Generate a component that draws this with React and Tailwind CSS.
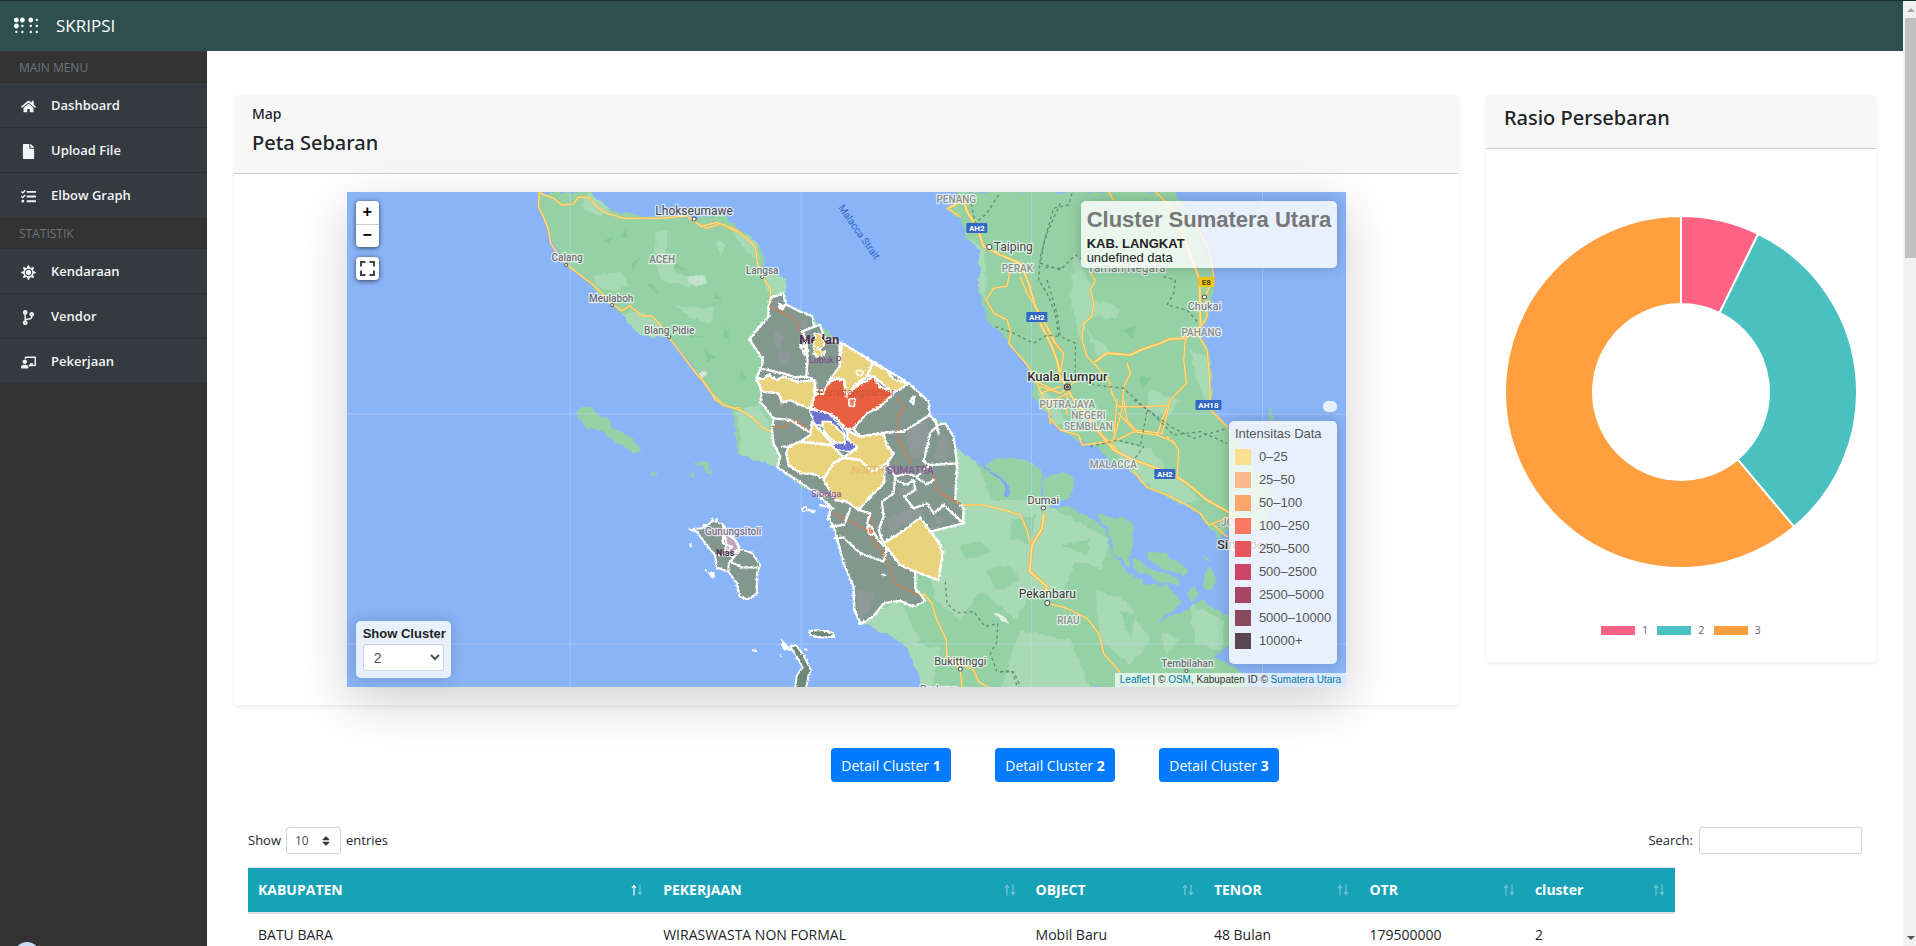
import React from "react";
import {
  FaBraille,
  FaHome,
  FaFile,
  FaTasks,
  FaSun,
  FaCodeBranch,
  FaChalkboardTeacher,
  FaSort,
} from "react-icons/fa";

const menu = [
  {
    title: "MAIN MENU",
    items: [
      { label: "Dashboard", Icon: FaHome },
      { label: "Upload File", Icon: FaFile },
      { label: "Elbow Graph", Icon: FaTasks },
    ],
  },
  {
    title: "STATISTIK",
    items: [
      { label: "Kendaraan", Icon: FaSun },
      { label: "Vendor", Icon: FaCodeBranch },
      { label: "Pekerjaan", Icon: FaChalkboardTeacher },
    ],
  },
];

const intensity = [
  ["0–25", "bg-[#fbe08f]"],
  ["25–50", "bg-[#fbb990]"],
  ["50–100", "bg-[#fca669]"],
  ["100–250", "bg-[#fb7962]"],
  ["250–500", "bg-[#e5575c]"],
  ["500–2500", "bg-[#cb4666]"],
  ["2500–5000", "bg-[#a74562]"],
  ["5000–10000", "bg-[#884a5d]"],
  ["10000+", "bg-[#584650]"],
];

const ratio = [
  { label: "1", value: 26, color: "#ff6384", swatch: "bg-[#ff6384]" },
  { label: "2", value: 114, color: "#4bc0c0", swatch: "bg-[#4bc0c0]" },
  { label: "3", value: 220, color: "#ff9f40", swatch: "bg-[#ff9f40]" },
];

const columns = [
  ["KABUPATEN", "w-[28.4%]"],
  ["PEKERJAAN", "w-[26.1%]"],
  ["OBJECT", "w-[12.5%]"],
  ["TENOR", "w-[10.9%]"],
  ["OTR", "w-[11.6%]"],
  ["cluster", "w-[10.5%]"],
];

const rows = [["BATU BARA", "WIRASWASTA NON FORMAL", "Mobil Baru", "48 Bulan", "179500000", "2"]];

function Sidebar() {
  return (
    <nav className="w-[207px] shrink-0 bg-[#333333]">
      {menu.map((group) => (
        <section key={group.title}>
          <h2 className="flex h-[31px] items-center px-[19px] pt-0.5 text-[12px] leading-4 text-[#6c757d]">
            {group.title}
          </h2>
          <ul>
            {group.items.map(({ label, Icon }) => (
              <li key={label} className="border-t border-[#2d3136]">
                <a
                  href="#"
                  className="flex h-11 items-center bg-[#343a40] pl-[19px] pt-0.5 text-[13px] font-semibold text-[#f3f4f5]"
                >
                  <span className="flex w-[18px] shrink-0 justify-center">
                    <Icon className="h-[15px] w-auto" />
                  </span>
                  <span className="ml-3.5">{label}</span>
                </a>
              </li>
            ))}
          </ul>
        </section>
      ))}
    </nav>
  );
}

function Place({ x, y, s = 11, w = 500, c = "#6a6f74", a = "middle", children, ...rest }) {
  return (
    <text
      x={x}
      y={y}
      fontSize={s}
      fontWeight={w}
      fill={c}
      textAnchor={a}
      stroke="#ffffff"
      strokeOpacity="0.7"
      strokeWidth="2.5"
      strokeLinejoin="round"
      paintOrder="stroke"
      {...rest}
    >
      {children}
    </text>
  );
}

function Shield({ x, y, w = 21, label, fill = "#3367c5", color = "#ffffff" }) {
  return (
    <g>
      <rect x={x} y={y} width={w} height="10" rx="1" fill={fill} />
      <text x={x + w / 2} y={y + 8} fontSize="8" fontWeight="700" fill={color} textAnchor="middle">
        {label}
      </text>
    </g>
  );
}

const crop3 = "translate(700 180) scale(0.3333)";
const crop2 = "translate(340 180) scale(0.3333)";
const crop4 = "translate(1040 180) scale(0.3333)";
const crop5 = "translate(340 430) scale(0.3333)";
const crop6 = "translate(1000 400) scale(0.3333)";
const crop12 = "translate(740 430) scale(0.3333)";

function Road({ d, wide }) {
  return (
    <>
      <path d={d} stroke="#f3b64a" strokeWidth={wide ? 9 : 6} />
      <path d={d} stroke="#ffe290" strokeWidth={wide ? 5 : 3} />
    </>
  );
}

function SumateraMap() {
  return (
    <svg
      viewBox="347 192 999 495"
      preserveAspectRatio="xMidYMid slice"
      className="block h-full w-full font-[Roboto,sans-serif]"
      role="img"
      aria-label="Peta Sumatera Utara"
    >
      <defs>
        <filter id="coast" x="-5%" y="-5%" width="110%" height="110%">
          <feTurbulence type="fractalNoise" baseFrequency="0.11" numOctaves="3" seed="4" />
          <feDisplacementMap in="SourceGraphic" scale="7" xChannelSelector="R" yChannelSelector="G" />
        </filter>
        <filter id="district" x="-5%" y="-5%" width="110%" height="110%">
          <feTurbulence type="fractalNoise" baseFrequency="0.14" numOctaves="3" seed="9" />
          <feDisplacementMap in="SourceGraphic" scale="9" xChannelSelector="R" yChannelSelector="G" />
        </filter>
        <clipPath id="land">
          <path d="M538 192 540 212 548 230 555 248 568 265 590 285 608 303 622 313 631 326 640 333 652 338 665 337 672 341 690 362 700 378 710 392 722 406 733 410 737 453 744 458 760 461 778 468 800 485 838 502 868 515 895 560 860 623 887 633 907 647 912 663 920 677 925 690 1248 690 1247 680 1233 665 1213 657 1228 647 1234 630 1228 617 1217 610 1200 600 1187 608 1157 622 1182 603 1167 585 1143 583 1127 573 1110 550 1105 528 1087 517 1072 508 1050 508 1041 500 1043 473 1033 463 1013 457 992 460 983 465 967 457 955 447 953 437 945 423 930 417 928 402 908 383 887 370 867 358 840 343 820 325 810 315 787 307 783 295 787 280 765 267 762 252 755 240 735 227 735 223 723 215 693 218 657 216 640 217 613 210 603 205 590 190Z" />
          <path d="M958 190 956 202 947 210 962 223 967 237 978 250 980 267 978 293 985 307 988 323 1000 330 1008 343 1023 360 1033 377 1033 397 1047 413 1060 430 1078 440 1097 447 1110 462 1133 472 1147 488 1167 497 1187 507 1203 520 1210 530 1218 538 1227 530 1262 530 1274 500 1250 460 1227 427 1210 407 1212 383 1210 353 1202 340 1197 332 1207 317 1213 290 1213 273 1200 240 1187 210 1173 190Z" />
        </clipPath>
      </defs>

      <rect x="347" y="192" width="999" height="495" fill="#8ab4f8" />

      <g filter="url(#coast)">
        <g clipPath="url(#land)">
          <rect x="347" y="192" width="999" height="495" fill="#94d2a5" />
          <g fill="#a8dab5">
            <path d="M950 430 975 455 990 500 1040 500 1110 540 1100 570 1075 560 1060 600 1030 590 1015 620 980 590 960 620 935 600 925 560 930 530 960 520Z" />
            <path d="M860 620 900 600 920 640 900 660ZM905 640 940 650 930 690 905 690ZM1095 590 1125 600 1150 640 1130 665 1100 640ZM1020 630 1070 640 1090 690 1000 690Z" />
            <path d="M737 410 760 405 775 440 780 470 740 455Z" />
            <path d="M620 312 645 312 670 335 650 340 632 328ZM765 268 790 280 785 300 765 290ZM590 192 610 208 600 217 580 205Z" />
            <path d="M655 232 668 230 666 255 680 275 700 280 690 288 660 280 655 255ZM595 275 620 272 628 285 615 292 598 285ZM675 305 715 308 712 322 690 318ZM715 240 725 245 720 255Z" />
            <path d="M1075 250 1095 300 1120 310 1115 320 1090 315 1080 340 1070 300ZM1085 330 1110 350 1100 360ZM1190 350 1210 360 1210 410 1196 380ZM965 235 985 250 985 300 975 290Z" />
            <path d="M1110 440 1150 450 1200 500 1180 505 1130 475ZM1150 390 1180 400 1170 415 1145 410ZM1035 385 1055 400 1070 430 1050 420Z" />
            <path d="M730 228 755 240 760 262 745 250ZM700 190 720 215 690 218 650 205Z" />
            <path d="M1190 605 1225 620 1220 650 1195 645ZM1160 630 1180 640 1165 655Z" />
          </g>
          <g fill="#94d2a5">
            <path d="M985 470 1010 465 1030 475 1025 490 1000 490ZM960 545 980 540 990 552 965 560ZM1010 520 1035 515 1030 545 1012 540ZM985 570 1010 565 1020 580 995 590ZM1060 545 1090 540 1085 555ZM1120 610 1135 615 1130 640Z" />
          </g>
          <g fill="#7fc596" opacity="0.7">
            <path d="M605 240 612 237 609 245ZM630 262 640 258 634 268ZM675 262 688 270 676 268ZM650 285 660 292 648 290ZM690 330 702 338 690 338ZM715 290 722 300 714 298ZM705 350 715 358 705 362ZM725 325 730 340 722 335ZM740 370 748 378 738 380ZM620 235 625 230 628 238ZM1100 230 1110 240 1100 245ZM1125 330 1135 325 1130 338ZM1140 375 1150 380 1140 388Z" />
          </g>
          <path d="M983 463 Q990 475 1000 478 T1007 497" fill="none" stroke="#7fa8f0" strokeWidth="3" />
          <path d="M995 613 Q1003 612 1008 623 Q1000 622 995 613Z" fill="#e0efe6" />
          <path d="M697 374 706 371 704 378Z" fill="#dfe6df" />
          <path d="M687 278 702 275 706 284 695 287Z" fill="#c3e2cc" />
        </g>
        <g fill="#94d2a5">
          <path transform={crop6} d="M130 240Q150 225 190 215L220 240 215 290 150 318 130 300ZM285 340 390 360 400 400 385 500 340 460 325 390ZM395 500 400 475 430 490 460 510 530 530 535 555 470 545ZM440 460 490 455 560 510 550 528 500 510 445 480ZM560 575 580 560 597 590 570 605ZM612 520 630 500 650 540 630 575 612 555ZM603 462 625 475 618 485ZM800 60 812 22 820 60Z" />
          <path transform={crop2} d="M710 700 725 680 755 678 772 705 812 718 818 742 870 772 905 810 880 820 820 780 780 755 735 740Z" />
          <path transform={crop5} d="M755 0 800 -8 850 20 903 58 880 72 840 45 800 12ZM1060 98 1105 96 1112 140 1090 112ZM935 125H947V135H937ZM1048 128H1066L1056 146Z" />
        </g>
      </g>

      <path
        d="M570 192V687M801 192V687M1031 192V687M1262 192V687M347 414H1346M347 644H1346"
        stroke="#c6dafb"
        strokeOpacity="0.5"
        strokeWidth="1"
      />

      <g fill="none" strokeLinejoin="round" strokeLinecap="round">
        <g transform={crop2}>
          <Road d="M598 36 595 80 612 115 625 150 632 190 655 225 680 255 720 285 760 315 790 345 815 372 845 392 870 378 905 408 935 408 965 440 987 472 1015 510 1045 550 1075 590 1100 615 1125 660 1165 682 1200 684" />
          <Road d="M600 40 640 55 665 75 700 72 715 52 745 52 775 85 800 100 850 115 960 115 1040 108 1070 130 1100 145 1140 132 1200 160" />
        </g>
        <g transform={crop3}>
          <Road d="M0 140 50 128 110 150 165 200 172 250 190 295 212 330 208 370" />
          <Road d="M0 590 30 635 70 675 120 690 160 715 190 745 215 755" />
          <Road d="M785 975 850 975 910 990 960 1005 980 1050 990 1090" />
          <Road wide d="M1030 1010 1020 1060 995 1090 988 1170 1030 1210 1045 1240" />
          <Road wide d="M745 85 790 60 800 95 830 140 850 200 900 225 960 250 985 310 1005 380 1040 440 1065 490 1080 510" />
          <Road d="M740 85 780 110M930 270 920 318 880 325 858 360 880 400 920 420 932 460 925 490 985 560 1010 610 1045 690 1050 730M960 290 980 340 1000 370M1000 600 1080 640M1020 640 1080 620M1030 660 1080 660" />
        </g>
        <g transform={crop4}>
          <Road wide d="M165 545 200 520 270 525 300 510 360 490 385 478 435 475 480 440 478 300 440 200 400 90" />
          <Road wide d="M0 430 30 490 50 540 60 590 100 660 150 720 190 770 230 810" />
          <Road d="M150 280 165 300 150 330 160 370 155 410 130 430 125 480 140 530 170 560 205 600 215 640 235 680 285 680 385 677M345 36 400 90 470 140 505 210 520 290 495 350 500 410 470 460 500 510 508 600 510 690 560 740M435 475 430 540 438 610 390 660 365 760 280 750 235 700M260 550 270 580 250 620 245 690 220 780M45 490 70 520 60 580M0 620 60 640 110 600M10 680 80 640 80 700M380 770 410 800M205 36 220 60" />
        </g>
        <g transform={crop6}>
          <Road wide d="M290 90 340 150 400 180 470 205 520 225 560 250 620 300 700 345" />
          <Road d="M145 50 180 90 235 105 245 135 290 130 350 120 400 95 470 105 520 125 535 150 530 230M400 215 440 262 500 285 560 315 600 340 625 375 690 350M630 30 680 80M370 0 380 60 410 95M470 105 500 20 510 0M350 0 340 120M640 375 680 410" />
          <Road d="M145 610 200 625 260 655 295 700 310 760 360 818" />
          <Road wide d="M130 345 125 385 95 435 88 515 140 560" />
        </g>
        <g transform={crop12}>
          <Road d="M550 490 575 520 590 570 618 630 620 680 700 720 715 755 750 775M620 680 660 720 665 770" />
        </g>
        <g stroke="#5d7f69" strokeWidth="4" strokeDasharray="9 9" strokeLinecap="butt" opacity="0.85">
          <path transform={crop3} d="M895 45 860 100 825 130 810 60M1080 70 1040 160 1020 230 1015 300 1040 340 1065 400 1075 470M1080 265 1030 262M885 440 940 460 1000 490 1040 465 1080 470" />
          <path transform={crop4} d="M95 40 85 75 40 85 10 190 0 250 60 270 105 225 130 240M20 300 50 400 60 470 105 490 105 590 160 615 250 625 320 690 300 800M370 290 405 300 400 340 380 375 440 390 475 430M320 690 400 745 460 775 560 745" />
          <path transform={crop6} d="M270 140 350 120 430 140 400 180M400 0 450 35 520 105 600 95 680 130M0 815 35 812 50 858" />
          <path transform={crop12} d="M615 455 620 520 650 548 700 545 735 590 772 580 770 635 750 670 770 725 820 725 840 770" />
        </g>
      </g>

      <g transform={crop3} filter="url(#district)" stroke="#ffffff" strokeWidth="7" strokeLinejoin="round" strokeLinecap="round">
        <path
          fill="#82978e"
          d="M205 375 215 352 250 340 255 372 300 395 335 407 342 440 360 435 372 475 425 490 500 535 560 570 625 610 685 665 688 705 712 735 735 730 760 770 770 850 765 960 790 985 788 1030 690 1055 660 1060 550 1090 600 1155 645 1175 645 1225 675 1262 640 1280 600 1262 550 1270 520 1308 482 1332 462 1290 460 1220 430 1150 410 1072 400 1040 385 1015 392 980 340 935 290 900 232 862 240 830 220 790 215 750 220 715 180 665 185 635 170 592 185 560 188 540 148 478 178 440 205 410Z"
        />
        <g fill="#8f999a" stroke="none">
          <path d="M225 450 250 470 240 505 215 490ZM235 520 270 515 265 555 235 550ZM620 745 680 720 690 800 640 840 620 790ZM720 760 745 780 740 840 700 840ZM470 1230 530 1240 500 1300 480 1310ZM560 1020 620 985 680 990 640 1020 570 1060ZM590 920 640 930 600 950ZM300 420 320 420 325 450 305 450ZM700 1000 740 1020 710 1040Z" />
        </g>
        <path
          d="M210 380 260 405 290 425 302 470M218 740 255 742 280 718 325 750M590 655 615 680 590 710 595 780 610 810 632 850M700 885 715 935 780 972M400 1000 460 1030 500 1050 540 1110 570 1160 582 1210 660 1248M480 990 510 1005 518 1040"
          fill="none"
          stroke="#c3825f"
          strokeWidth="5"
        />
        <path
          fill="none"
          d="M342 440 305 455 318 480 322 540 318 590 285 592 250 580 180 565M318 590 345 600 345 630 368 630M418 560V495M222 715 270 720 325 755M245 800 265 800M460 748 480 770 545 758 610 755 688 705M545 758 560 795 580 820 560 850 585 890 620 880 650 890 690 855 770 850M710 738 690 760 670 845 690 855M585 890 580 940 545 965 550 1010 535 1050 550 1090M585 900 620 915 640 900 645 930 612 950 640 985 680 970 700 1000 730 975 790 1030M650 895 680 912 700 900M405 1075 430 1072 480 1120 550 1145 560 1110 535 1080 515 1050 500 1030 510 1000 475 990M450 985 432 1035 390 1040M545 1185H555M635 655 642 650 640 670 630 665ZM300 495 320 500 310 520ZM705 720 715 760M325 990 335 995M340 930 380 950M360 975 400 985"
        />
        <path fill="#ffffff" d="M236 368 246 382 256 374 246 388 238 384Z" />
        <g fill="#e9d27c">
          <path d="M425 490 500 535 517 550 500 590 470 612 435 650 432 600 410 595 385 605 418 560Z" />
          <path d="M517 550 560 570 580 598 625 610 600 628 575 637 540 605 518 588 500 590Z" />
          <path d="M168 592 190 598 205 585 230 600 250 590 290 605 342 602 345 640 330 687 300 675 270 660 245 668 235 640 185 635Z" />
          <path d="M335 725 370 760 400 795 300 785 330 765Z" />
          <path d="M265 800 300 785 395 797 430 832 400 850 370 895 340 882 300 880 265 855 258 820Z" />
          <path d="M440 752 480 770 550 760 560 800 580 820 560 850 515 875 480 840 430 832 472 805 445 785Z" />
          <path d="M430 835 480 840 515 875 552 860 552 910 510 950 475 990 440 965 405 960 370 900 400 850Z" />
          <path d="M550 1090 610 1052 660 1012 690 1055 715 1085 727 1120 715 1200 645 1175 600 1155Z" />
          <path d="M470 570 490 575 482 590 470 585Z" strokeWidth="4" />
        </g>
        <path fill="#e8603f" d="M385 607 410 597 432 603 437 650 470 617 500 602 520 590 540 622 580 640 540 680 500 700 460 745 435 748 410 715 385 700 332 685 345 642 368 642Z" />
        <path fill="#6c72cf" strokeWidth="4" d="M328 690 385 700 425 745 442 780 472 800 450 815 405 808 398 790 430 788 405 760 370 735 345 735Z" />
        <path fill="#e9d27c" strokeWidth="5" d="M365 725 390 725 432 765 435 790 400 785 372 755Z" />
        <path fill="#e8806a" strokeWidth="5" d="M445 658 465 655 462 680 447 678ZM500 1040 515 1040 520 1062 508 1065Z" />
        <g fill="#ffffff" strokeWidth="4">
          <path fill="none" d="M305 985 318 980 320 992 308 995ZM330 990 342 992 338 998Z" />
          <path d="M28 1180 40 1178 42 1190 32 1190Z" />
        </g>
      </g>
      <g transform={crop5} filter="url(#district)" stroke="#ffffff" strokeWidth="6" strokeLinejoin="round">
        <path fill="#82978e" d="M1048 298 1085 295 1120 272 1150 285 1165 310 1190 335 1200 358 1235 368 1260 405 1250 430 1250 490 1225 508 1198 500 1190 460 1165 425 1130 412 1125 375 1095 340 1070 305Z" />
        <path fill="#bfa8bd" d="M1150 305 1185 330 1197 355 1175 375 1150 370 1160 345Z" />
        <path fill="none" d="M1150 285 1148 340 1175 350 1160 365M1125 375 1185 378 1200 358M1185 378 1165 400V425M1170 395 1205 412 1252 412M1090 285 1100 285" />
        <path fill="#ffffff" d="M1108 430 1120 430 1118 442ZM1050 342 1052 350ZM1097 420 1099 424ZM1238 660 1248 664ZM1115 265V275M1130 265V275M1325 630 1350 660 1330 655ZM1395 655 1400 662M1320 675 1325 678" />
        <path fill="#6f8878" d="M1408 603 1440 600 1478 608 1482 620 1440 622 1410 615ZM1350 650 1368 645 1390 675 1412 720 1405 738 1397 775 1365 775 1370 735 1388 712 1370 680Z" />
      </g>

      <g fill="#ffffff" stroke="#555555" strokeWidth="1">
        <circle cx="694" cy="219" r="2" />
        <circle cx="566" cy="265" r="1.5" />
        <circle cx="612" cy="305" r="1.5" />
        <circle cx="669" cy="337" r="1.5" />
        <circle cx="762" cy="277" r="1.5" />
        <circle cx="989" cy="247" r="2.5" />
        <circle cx="1204" cy="297" r="2" />
        <circle cx="1043" cy="508" r="2" />
        <circle cx="1047" cy="603" r="2.5" />
        <circle cx="960" cy="669" r="2" />
        <circle cx="1186" cy="671" r="1.5" />
      </g>
      <circle cx="1067" cy="387" r="3.5" fill="#333333" />
      <circle cx="1067" cy="387" r="2" fill="#333333" stroke="#ffffff" strokeWidth="0.8" />

      <Place x={694} y={215} s={12} w={400} c="#444444">Lhokseumawe</Place>
      <Place x={567} y={261} s={10}>Calang</Place>
      <Place x={662} y={263} s={10} c="#7b8580" w={600}>ACEH</Place>
      <Place x={611} y={302} s={10}>Meulaboh</Place>
      <Place x={669} y={334} s={10}>Blang Pidie</Place>
      <Place x={762} y={274} s={10}>Langsa</Place>
      <Place x={956} y={203} s={10} c="#8a918d">PENANG</Place>
      <Place x={1013} y={251} s={12} w={400} c="#444444">Taiping</Place>
      <Place x={1017} y={272} s={10} c="#8a918d">PERAK</Place>
      <Place x={1067} y={381} s={13} c="#333333">Kuala Lumpur</Place>
      <Place x={1067} y={408} s={10} c="#8a918d">PUTRAJAYA</Place>
      <Place x={1088} y={419} s={10} c="#8a918d">NEGERI</Place>
      <Place x={1088} y={430} s={10} c="#8a918d">SEMBILAN</Place>
      <Place x={1113} y={468} s={10} c="#8a918d">MALACCA</Place>
      <Place x={1204} y={310} s={11} w={400}>Chukai</Place>
      <Place x={1201} y={336} s={10} c="#8a918d">PAHANG</Place>
      <Place x={1126} y={272} s={12} w={400} c="#6d8574">Taman Negara</Place>
      <Place x={1043} y={504} s={11} w={400} c="#444444">Dumai</Place>
      <Place x={1047} y={598} s={12} w={400} c="#333333">Pekanbaru</Place>
      <Place x={1068} y={624} s={10} c="#8a918d">RIAU</Place>
      <Place x={1187} y={667} s={10}>Tembilahan</Place>
      <Place x={960} y={665} s={11} w={400} c="#444444">Bukittinggi</Place>
      <Place x={938} y={693} s={11} w={400}>Padang</Place>
      <Place x={1246} y={549} s={13} c="#333333">Singapore</Place>
      <Place x={1237} y={526} s={10} c="#8a918d">JOHOR</Place>
      <Place x={733} y={535} s={10} c="#7d6f88">Gunungsitoli</Place>
      <Place x={819} y={344} s={13} w={700} c="#4c2f4c" strokeOpacity="0.15">Medan</Place>
      <Place x={825} y={363} s={9} c="#7a5588" strokeOpacity="0">Lubuk P</Place>
      <Place x={856} y={396} s={10} w={400} c="#cf5236" strokeOpacity="0">Pematangsiantar</Place>
      <Place x={868} y={474} s={10} c="#e6bb70" strokeOpacity="0">NORTH</Place>
      <Place x={910} y={474} s={10} c="#855c91" w={700} strokeOpacity="0">SUMATRA</Place>
      <Place x={826} y={497} s={9} c="#8b5f94" strokeOpacity="0">Sibolga</Place>
      <Place x={725} y={556} s={9} c="#4a2f4c" w={700} strokeOpacity="0">Nias</Place>
      <g filter="url(#district)" stroke="#ffffff" strokeWidth="1.5" fill="#e9d27c">
        <path d="M815 333 823 336 823 343 818 350 824 352 824 356 815 355 813 348Z" />
        <path d="M803 340 806 350 802 356 808 350" fill="none" />
      </g>
      <text fontSize="10" fill="#2f66c4" textAnchor="middle" transform="translate(856 234) rotate(55)">
        Malacca Strait
      </text>
      <Shield x={966} y={223} label="AH2" />
      <Shield x={1026} y={312} label="AH2" />
      <Shield x={1195} y={400} w={26} label="AH18" />
      <Shield x={1154} y={469} label="AH2" />
      <Shield x={1198} y={277} w={16} label="E8" fill="#f3c61b" color="#4c3d00" />
    </svg>
  );
}

function MapPanel() {
  const panel = "rounded-[5px] bg-white/80 shadow-[0_0_15px_rgba(0,0,0,0.2)]";
  const square =
    "flex size-[23px] items-center justify-center bg-white font-['Liberation_Mono',monospace] text-[16px] font-bold leading-none text-black";
  return (
    <div className="relative mx-auto h-[495px] w-[81.6%] font-['Liberation_Sans',Arial,sans-serif] shadow-[0_16px_48px_rgba(0,0,0,0.175)]">
      <SumateraMap />

      <div className="absolute left-[9px] top-[9px] flex flex-col gap-2.5">
        <div className="flex flex-col overflow-hidden rounded-[4px] shadow-[0_1px_5px_rgba(0,0,0,0.65)]">
          <button type="button" className={square} aria-label="Zoom in">
            +
          </button>
          <button type="button" className={`${square} border-t border-[#cccccc]`} aria-label="Zoom out">
            −
          </button>
        </div>
        <button
          type="button"
          className="flex size-[23px] items-center justify-center rounded-[4px] bg-white shadow-[0_1px_5px_rgba(0,0,0,0.65)]"
          aria-label="Full screen"
        >
          <svg viewBox="0 0 15 15" className="size-[15px]" fill="none" stroke="#444444" strokeWidth="2">
            <path d="M1 5.5V1H5.5M9.5 1H14V5.5M14 9.5V14H9.5M5.5 14H1V9.5" />
          </svg>
        </button>
      </div>

      <div className={`absolute right-[9px] top-[9px] px-1.5 pb-[3px] pt-1.5 text-[13px] leading-[14px] text-[#222222] ${panel}`}>
        <h4 className="mb-1 text-[22px] font-bold leading-[26px] text-[#777777]">Cluster Sumatera Utara</h4>
        <b className="block font-bold">KAB. LANGKAT</b>
        <p>undefined data</p>
      </div>

      <div className="absolute right-[9px] top-[209px] h-[11px] w-[14px] rounded-[5px] bg-white/80" />

      <div className={`absolute right-[9px] top-[229px] h-[243px] px-1.5 pt-1 text-[13px] text-[#555555] ${panel}`}>
        <p className="leading-[18px]">Intensitas Data</p>
        <ul className="mt-0.5">
          {intensity.map(([range, swatch]) => (
            <li key={range} className="flex h-[23px] items-center gap-2">
              <i className={`size-4 ${swatch}`} />
              {range}
            </li>
          ))}
        </ul>
      </div>

      <div className={`absolute bottom-[9px] left-[9px] h-[57px] w-[95px] px-[7px] pt-1 ${panel}`}>
        <label htmlFor="cluster" className="block whitespace-nowrap text-center text-[13px] font-bold leading-[17px] text-[#222222]">
          Show Cluster
        </label>
        <select
          id="cluster"
          defaultValue="2"
          className="mt-0.5 h-[27px] w-full rounded-[3px] border border-[#ced4da] bg-white px-1.5 text-[14px] text-[#495057]"
        >
          <option>1</option>
          <option>2</option>
          <option>3</option>
        </select>
      </div>

      <p className="absolute bottom-0 right-0 bg-white/70 px-[5px] text-[10px] leading-[14px] text-[#333333]">
        <a href="#" className="text-[#0078a8]">Leaflet</a> | © <a href="#" className="text-[#0078a8]">OSM</a>, Kabupaten ID ©{" "}
        <a href="#" className="text-[#0078a8]">Sumatera Utara</a>
      </p>
    </div>
  );
}

function Doughnut() {
  const total = ratio.reduce((sum, slice) => sum + slice.value, 0);
  const point = (angle, r) => `${176 + r * Math.sin(angle)} ${176 - r * Math.cos(angle)}`;
  let start = 0;
  return (
    <svg viewBox="0 0 352 352" className="mx-auto block w-[352px] max-w-full" role="img" aria-label="Rasio Persebaran">
      {ratio.map((slice) => {
        const a = start;
        const b = a + (slice.value / total) * Math.PI * 2;
        const large = b - a > Math.PI ? 1 : 0;
        start = b;
        return (
          <path
            key={slice.label}
            d={`M${point(a, 176)}A176 176 0 ${large} 1 ${point(b, 176)}L${point(b, 88)}A88 88 0 ${large} 0 ${point(a, 88)}Z`}
            fill={slice.color}
            stroke="#ffffff"
            strokeWidth="2"
          />
        );
      })}
    </svg>
  );
}

function SortArrows({ active }) {
  return (
    <svg viewBox="0 0 12 12" className="h-3 w-3 shrink-0" fill="none" stroke="#ffffff" strokeWidth="1.2">
      <path d="M3 11.5V1.5M1 4 3 1.5 5 4" strokeOpacity={active ? 1 : 0.4} />
      <path d="M9 .5V10.5M7 8 9 10.5 11 8" strokeOpacity="0.4" />
    </svg>
  );
}

export default function App() {
  const card = "rounded-[4px] bg-white shadow-[0_2px_4px_rgba(0,0,0,0.075)]";
  return (
    <div className="relative flex h-screen overflow-hidden bg-white font-['Open_Sans','Noto_Sans',sans-serif] text-[14px] text-[#212529]">
      <div className="flex min-w-0 flex-1 flex-col">
        <header className="flex h-[51px] shrink-0 items-center border-t border-[#1d3134] bg-[#2f4f4f] pl-[14px] text-white">
          <FaBraille className="h-5 w-6" />
          <span className="ml-[18px] text-[17px] leading-6">SKRIPSI</span>
        </header>

        <div className="flex min-h-0 flex-1">
          <Sidebar />

          <main className="min-w-0 flex-1 overflow-hidden pt-11">
            <div className="grid grid-cols-[3.14fr_1fr] items-start gap-[27px] px-[27px]">
              <section className={card}>
                <header className="h-[79px] rounded-t-[4px] border-b border-[#d0d0d0] bg-[#f7f7f7] px-[18px] pt-[9px]">
                  <p className="font-['Noto_Sans',sans-serif] text-[14px] font-medium leading-5">Map</p>
                  <h3 className="mt-[5px] font-['Noto_Sans',sans-serif] text-[20px] font-medium leading-7">Peta Sebaran</h3>
                </header>
                <div className="py-[18px]">
                  <MapPanel />
                </div>
              </section>

              <section className={card}>
                <header className="h-[54px] rounded-t-[4px] border-b border-[#d0d0d0] bg-[#f7f7f7] px-[18px] pt-[9px]">
                  <h3 className="font-['Noto_Sans',sans-serif] text-[20px] font-medium leading-7">Rasio Persebaran</h3>
                </header>
                <div className="pb-6 pt-[67px]">
                  <Doughnut />
                  <ul className="mt-[54px] flex justify-center gap-[9px] text-[11px] leading-4 text-[#666666]">
                    {ratio.map((slice) => (
                      <li key={slice.label} className="flex items-center gap-[7px]">
                        <i className={`h-[9px] w-[34px] ${slice.swatch}`} />
                        {slice.label}
                      </li>
                    ))}
                  </ul>
                </div>
              </section>
            </div>

            <div className="mt-[43px] flex justify-center gap-11">
              {[1, 2, 3].map((n) => (
                <button key={n} type="button" className="h-[34px] w-[120px] whitespace-nowrap rounded-[4px] bg-[#007bff] text-[14px] text-white">
                  Detail Cluster <b>{n}</b>
                </button>
              ))}
            </div>

            <div className="mt-[45px] px-[41px]">
              <div className="flex items-center justify-between">
                <label className="flex items-center gap-[5px] text-[13px]">
                  Show
                  <span className="relative">
                    <select
                      defaultValue="10"
                      className="h-[27px] w-[55px] appearance-none rounded-[3px] border border-[#ced4da] bg-white pl-2 text-[12px] text-[#495057]"
                    >
                      <option>10</option>
                      <option>25</option>
                      <option>50</option>
                    </select>
                    <FaSort className="pointer-events-none absolute right-2.5 top-2 h-3 w-2.5 text-[#343a40]" />
                  </span>
                  entries
                </label>
                <label className="flex items-center gap-1.5 text-[13px]">
                  Search:
                  <input type="search" className="h-[27px] w-[163px] rounded-[3px] border border-[#ced4da] bg-white px-2" />
                </label>
              </div>

              <table className="mt-[13px] w-[88.4%] table-fixed border-collapse text-left text-[14px] leading-5">
                <thead>
                  <tr className="h-[45px] border-b-2 border-t border-[#dee2e6] bg-[#17a2b8] text-white">
                    {columns.map(([name, width], i) => (
                      <th key={name} className={`px-2.5 font-bold ${width}`}>
                        <span className="flex items-center justify-between">
                          {name}
                          <SortArrows active={i === 0} />
                        </span>
                      </th>
                    ))}
                  </tr>
                </thead>
                <tbody>
                  {rows.map((row, r) => (
                    <tr key={r} className="h-[45px] border-b border-[#dee2e6]">
                      {row.map((cell, c) => (
                        <td key={c} className="px-2.5">
                          {cell}
                        </td>
                      ))}
                    </tr>
                  ))}
                </tbody>
              </table>
            </div>
          </main>
        </div>
      </div>

      <div className="flex w-[13px] shrink-0 flex-col items-center border-t border-[#1d3134] bg-[#f1f1f1] pl-0.5" aria-hidden="true">
        <svg viewBox="0 0 11 17" className="h-[17px] w-[11px]">
          <path d="M2 11 6 7 10 11Z" fill="#a3a3a3" />
        </svg>
        <div className="h-[240px] w-full bg-[#c1c1c1]" />
        <svg viewBox="0 0 11 17" className="mt-auto h-[17px] w-[11px]">
          <path d="M2 7 6 11 10 7Z" fill="#505050" />
        </svg>
      </div>

      <div className="absolute -bottom-[22px] left-[14px] size-[26px] rounded-full bg-[#c9dcf2]" aria-hidden="true" />
    </div>
  );
}
